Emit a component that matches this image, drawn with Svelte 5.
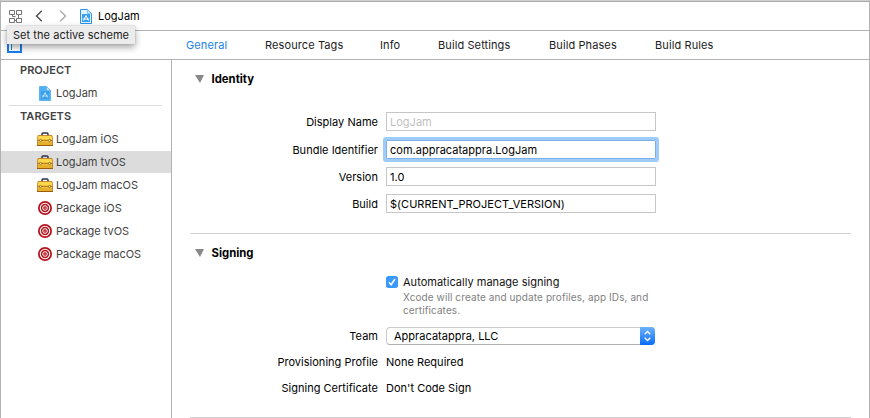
<script>
  const tabs = [
    { label: 'General', width: 40, gap: 39 },
    { label: 'Resource Tags', width: 77, gap: 38 },
    { label: 'Info', width: 20, gap: 38 },
    { label: 'Build Settings', width: 73, gap: 38 },
    { label: 'Build Phases', width: 68, gap: 38 },
    { label: 'Build Rules', width: 60, gap: 0 },
  ];
  const targets = [
    { name: 'LogJam iOS', kind: 'app' },
    { name: 'LogJam tvOS', kind: 'app' },
    { name: 'LogJam macOS', kind: 'app' },
    { name: 'Package iOS', kind: 'aggregate' },
    { name: 'Package tvOS', kind: 'aggregate' },
    { name: 'Package macOS', kind: 'aggregate' },
  ];
  const identity = [
    { label: 'Display Name', value: 'LogJam', placeholder: true },
    { label: 'Bundle Identifier', value: 'com.appracatappra.LogJam', focused: true },
    { label: 'Version', value: '1.0' },
    { label: 'Build', value: '$(CURRENT_PROJECT_VERSION)' },
  ];
  let selected = $state('LogJam tvOS');
  let activeTab = $state('General');
</script>

{#snippet sheet(outlined)}
  <svg width="12" height="15" viewBox="0 0 12 15">
    <path d="M.5.5h7l4 4v10H.5z" fill={outlined ? '#e3f3fe' : '#4fb1f5'} stroke={outlined ? '#2e92e8' : '#5cb3f0'} />
    <path d="M7.500.5v4h4z" fill="#c3e3fb" stroke="#5db0ef" stroke-width=".6" />
    <path d="M2 5h8v8H2z" fill={outlined ? '#37a0f0' : '#3a9eea'} />
    <path d="M3.500 11.500L6 6.500l2.500 5M2.800 10h6.400" fill="none" stroke={outlined ? '#fff' : '#b5defa'} />
  </svg>
{/snippet}

<div class="window">
  <header class="jumpbar">
    <svg width="13" height="13" viewBox="0 0 13 13" fill="none" stroke="#757575">
      <path d="M.5.5h5v4h-5zM7.500.5h5v4h-5zM.5 8.500h5v4h-5zM7.500 8.500h5v4h-5zM3.500 4.500v2h3M9.500 4.500v4M5.500 10.500h2" />
    </svg>
    <svg class="back" width="8" height="12" viewBox="0 0 8 12"><path d="M6.800.7L1.500 6l5.300 5.300" fill="none" stroke="#4d4d4d" stroke-width="1.400" /></svg>
    <svg class="forward" width="8" height="12" viewBox="0 0 8 12"><path d="M1.200.7L6.500 6l-5.300 5.300" fill="none" stroke="#a6a6a6" stroke-width="1.300" /></svg>
    {@render sheet(true)}
    <span class="crumb">LogJam</span>
    <div class="tooltip">Set the active scheme</div>
  </header>

  <nav class="tabs">
    <svg class="pane" width="15" height="14" viewBox="0 0 15 14"><path d="M1 1h13v12H1z" fill="none" stroke="#1a7cf0" stroke-width="2" /><path d="M4.500 1v10" stroke="#1a7cf0" /></svg>
    {#each tabs as tab}
      <button class:active={tab.label === activeTab} style:width="{tab.width}px" style:margin-right="{tab.gap}px" onclick={() => (activeTab = tab.label)}>{tab.label}</button>
    {/each}
  </nav>

  <div class="body">
    <aside>
      <h3>PROJECT</h3>
      <div class="row first"><span class="icon">{@render sheet(false)}</span>LogJam</div>
      <hr />
      <h3 class="second">TARGETS</h3>
      {#each targets as target}
        <button class="row" class:selected={target.name === selected} onclick={() => (selected = target.name)}>
          <span class="icon">
            {#if target.kind === 'app'}
              <svg width="16" height="14" viewBox="0 0 16 14">
                <path d="M5 3.500V2Q5 1 6 1h4q1 0 1 1v1.500" fill="none" stroke="#2d3047" stroke-width="1.500" />
                <path d="M1 3.500h14l.5 4v6H.5v-6z" fill="#e6b02c" stroke="#b9791a" stroke-width=".8" />
                <path d="M1.500 4h13l.5 3.500H1z" fill="#fcd94a" />
                <path d="M.5 8.500h15" stroke="#b9791a" />
                <path d="M1 9.500h14" stroke="#f3c94a" stroke-width=".8" />
                <path d="M0 13.500h16" stroke="#9b5d0b" />
                <circle cx="3.500" cy="8.500" r="1.100" fill="#f5e4a0" stroke="#8a5a18" stroke-width=".7" />
                <circle cx="12.500" cy="8.500" r="1.100" fill="#f5e4a0" stroke="#8a5a18" stroke-width=".7" />
              </svg>
            {:else}
              <svg width="14" height="14" viewBox="0 0 14 14">
                <circle cx="7" cy="7" r="7" fill="#b5121b" />
                <circle cx="7" cy="7" r="4.700" fill="none" stroke="#fff" stroke-width="1.100" />
                <circle cx="7" cy="7" r="2.300" fill="none" stroke="#fff" stroke-width="1" />
                <circle cx="7" cy="7" r=".6" fill="#fff" />
              </svg>
            {/if}
          </span>{target.name}
        </button>
      {/each}
    </aside>

    <main>
      <section class="identity">
        <h2><i class="disclosure"></i>Identity</h2>
        <div class="fields">
          {#each identity as field}
            <div class="field">
              <span class="label">{field.label}</span>
              <span class="input" class:focused={field.focused} class:placeholder={field.placeholder}>{field.value}</span>
            </div>
          {/each}
        </div>
      </section>
      <section class="signing">
        <h2><i class="disclosure"></i>Signing</h2>
        <div class="auto">
          <svg width="12" height="12" viewBox="0 0 12 12"><rect width="12" height="12" rx="2.500" fill="#3b99fc" /><path d="M3 6.300l2.100 2.400L9 3" fill="none" stroke="#fff" stroke-width="1.500" /></svg>
          <div>
            <div class="check-label">Automatically manage signing</div>
            <p>Xcode will create and update profiles, app IDs, and<br />certificates.</p>
          </div>
        </div>
        <div class="line">
          <span class="label">Team</span>
          <span class="select">Appracatappra, LLC
            <span class="stepper"><svg width="15" height="18" viewBox="0 0 15 18"><path d="M4.700 7.200L7.500 4.500l2.800 2.700M4.700 10.800l2.800 2.700 2.800-2.700" fill="none" stroke="#fff" stroke-width="1.300" /></svg></span>
          </span>
        </div>
        <div class="line"><span class="label">Provisioning Profile</span><span class="value">None Required</span></div>
        <div class="line"><span class="label">Signing Certificate</span><span class="value">Don't Code Sign</span></div>
      </section>
    </main>
  </div>
</div>

<style>
  .window {
    box-sizing: border-box;
    width: 870px;
    height: 418px;
    overflow: hidden;
    background: #fff;
    border: 1px solid #b2b2b2;
    border-top-color: #cfcfcf;
    border-bottom: 0;
    font: 11px/14px Inter, 'Liberation Sans', sans-serif;
    letter-spacing: 0.02px;
    color: #1c1c1c;
  }
  svg { display: block; flex: none; }
  button { font: inherit; letter-spacing: inherit; border: 0; padding: 0; background: none; color: inherit; text-align: left; white-space: nowrap; }
  .jumpbar {
    position: relative;
    box-sizing: border-box;
    height: 30px;
    display: flex;
    align-items: center;
    padding-left: 8px;
    border-top: 1px solid #aaa;
    border-bottom: 1px solid #b2b2b2;
  }
  .back { margin-left: 13px; }
  .forward { margin: 0 13px 0 16px; }
  .crumb { margin-left: 6px; color: #000; }
  .tooltip {
    position: absolute;
    z-index: 2;
    left: 6px;
    top: 24px;
    width: 128px;
    height: 18px;
    box-sizing: border-box;
    padding-left: 6px;
    line-height: 18px;
    letter-spacing: 0.05px;
    white-space: nowrap;
    background: #ececec;
    box-shadow: 0 0 1px #999, 0 3px 7px rgba(0, 0, 0, 0.38);
  }
  .tabs {
    height: 28px;
    display: flex;
    align-items: center;
    letter-spacing: 0.1px;
    border-bottom: 1px solid #b2b2b2;
  }
  .pane { margin: 1px 164px 0 6px; }
  .active { color: #1a82e2; }
  .body { display: flex; height: 358px; }
  aside {
    box-sizing: border-box;
    width: 171px;
    border-right: 1px solid #b2b2b2;
    color: #424242;
    padding-top: 3px;
  }
  h3 { margin: 0 0 0 19px; font-size: 11px; line-height: 15px; font-weight: 600; letter-spacing: 0.04px; }
  .second { margin-bottom: 4px; }
  .row {
    box-sizing: border-box;
    width: 170px;
    height: 22px;
    margin-bottom: 1px;
    display: flex;
    align-items: center;
    padding-left: 35px;
    letter-spacing: -0.03px;
  }
  .first { margin: 4px 0 0; }
  .icon { width: 18px; margin-right: 2px; display: flex; justify-content: center; }
  .selected { background: #dcdcdc; }
  hr { margin: 1px 9px 3px 8px; border: 0; border-top: 1px solid #dedede; }
  main { flex: 1; padding: 0 18px 0 18px; }
  section { box-sizing: border-box; border-bottom: 1px solid #d0d0d0; padding-top: 12px; }
  .identity { height: 174px; }
  .signing { height: 184px; }
  h2 { margin: 0; display: flex; align-items: center; font-size: 11.300px; line-height: 15px; font-weight: 700; color: #000; }
  .disclosure { margin: -1px 7.500px 0 5px; border: 0 solid transparent; border-width: 8px 4.700px 0; border-top-color: #888; }
  .disclosure { width: 0; border-left-width: 5px; }
  .fields { padding-top: 25px; display: flex; flex-direction: column; gap: 8px; }
  .field, .line { display: flex; align-items: center; color: #000; }
  .field:first-child { margin-bottom: 1px; }
  .label { width: 188px; margin-right: 8px; text-align: right; white-space: nowrap; }
  .input { box-sizing: border-box; width: 270px; height: 19px; padding-left: 3px; line-height: 18px; border: 1px solid #c6c6c6; }
  .placeholder { color: #bfbfbf; }
  .focused { border-color: #7eb0e4; box-shadow: 0 0 0 3px #9dccfd; border-radius: 1px; }
  .auto { display: flex; margin: 15px 0 0 196px; gap: 5px; }
  .check-label { line-height: 13px; color: #111; }
  p { margin: 2px 0 0; font-size: 10px; letter-spacing: 0.1px; line-height: 13px; color: #7f7f7f; white-space: nowrap; }
  .line { height: 26px; }
  .auto + .line { margin-top: 6px; }
  .select {
    position: relative;
    box-sizing: border-box;
    width: 269px;
    height: 18px;
    padding-left: 7px;
    line-height: 17px;
    border: 1px solid #cbcbcb;
    border-bottom-color: #b0b0b0;
    border-radius: 4px;
  }
  .stepper { position: absolute; right: -1px; top: -1px; border-radius: 0 4px 4px 0; background: linear-gradient(#6cb3fa, #0a6cf8); }
</style>
